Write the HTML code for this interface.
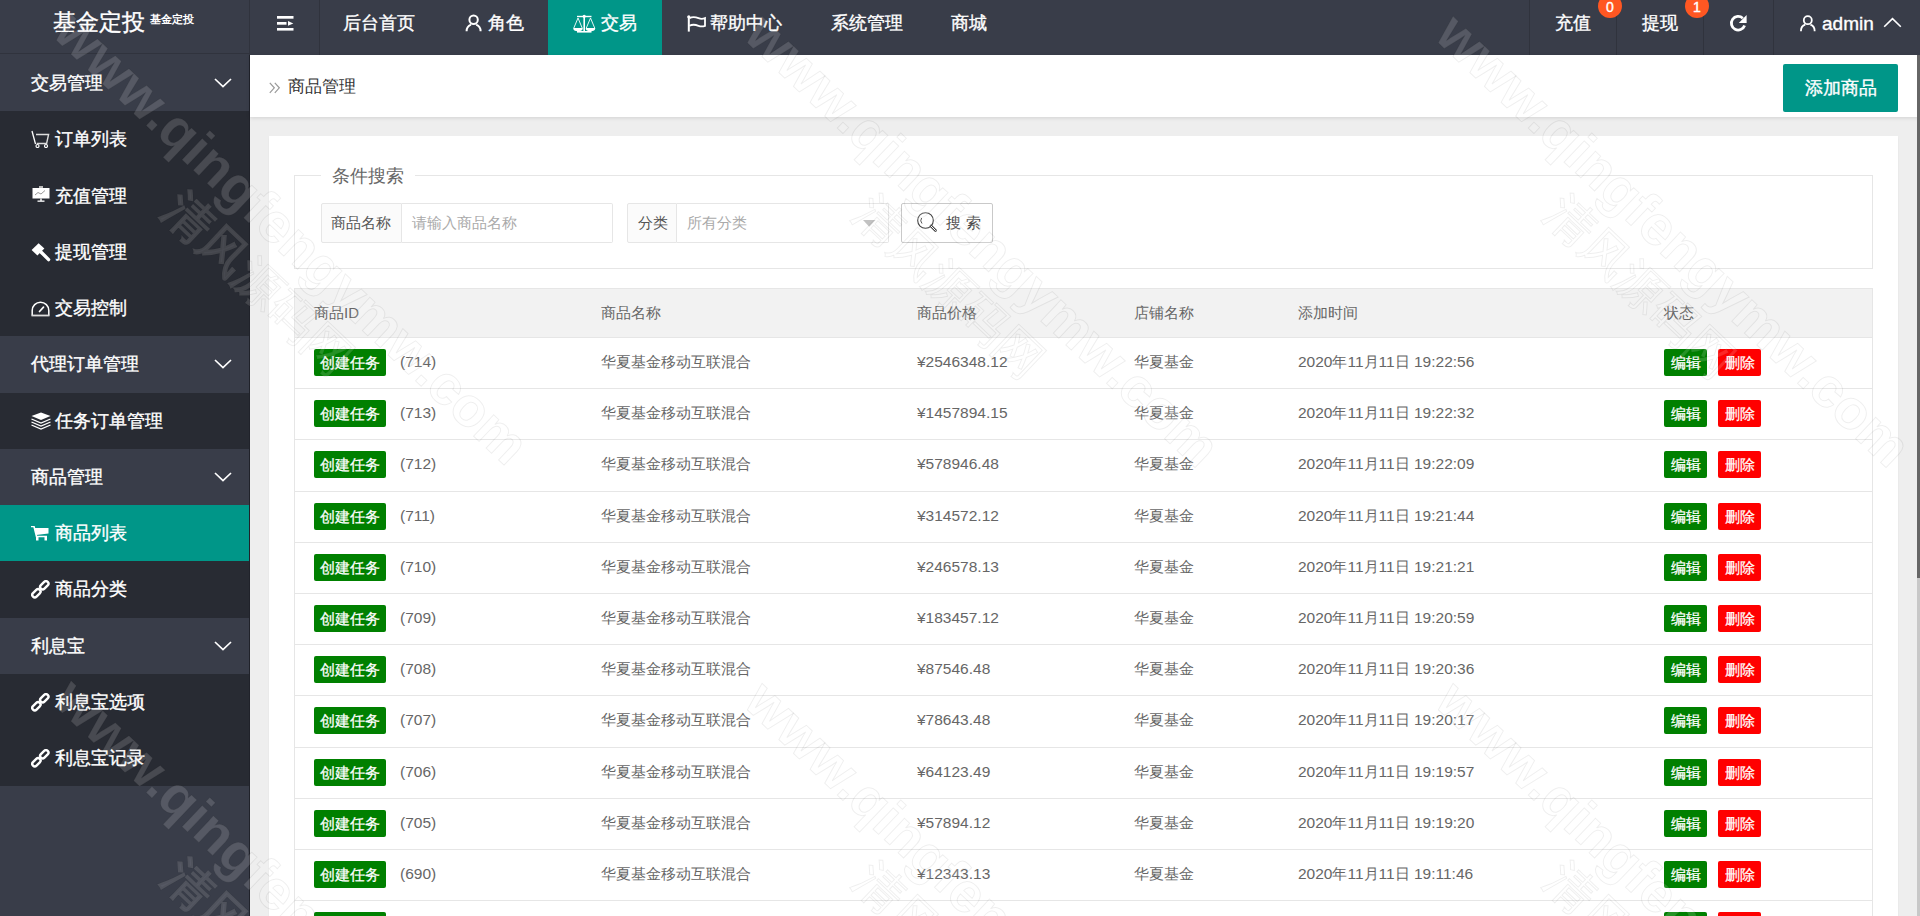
<!DOCTYPE html>
<html><head><meta charset="utf-8">
<style>
*{margin:0;padding:0;box-sizing:border-box}
html,body{width:1920px;height:916px;overflow:hidden;background:#eee;font-family:"Liberation Sans",sans-serif;color:#666}
.abs{position:absolute}
#hdr{position:absolute;left:0;top:0;width:1920px;height:55px;background:#393D49}
#logo{position:absolute;left:0;top:0;width:250px;height:54px;border-bottom:1px solid #30333d}
#logo .big{position:absolute;left:53px;top:6px;font-size:23px;line-height:32px;color:#fff;-webkit-text-stroke:0.35px #fff}
#logo .sm{position:absolute;left:150px;top:11px;font-size:11px;line-height:16px;color:#fff;font-weight:bold}
.vl{position:absolute;top:0;width:1px;height:55px;background:#30333d}
.nav{position:absolute;top:0;height:55px;line-height:47px;font-size:18px;color:#fff;white-space:nowrap;-webkit-text-stroke:0.35px #fff}
#side{position:absolute;left:0;top:55px;width:250px;height:861px;background:#393D49;border-right:1px solid #20222a}
.grp{position:absolute;left:0;width:249px;background:#393D49;color:#fff;font-size:18px;-webkit-text-stroke:0.35px #fff}
.item{position:absolute;left:0;width:249px;background:#282B33;color:#fff;font-size:18px;-webkit-text-stroke:0.35px #fff}
.sel{background:#009688}
.t{position:absolute;left:31px;top:0;line-height:56px;white-space:nowrap}
#main{position:absolute;left:250px;top:55px;width:1670px;height:861px;background:#eeeeee}
#crumb{position:absolute;left:0;top:0;width:1670px;height:62px;background:#fff;box-shadow:0 1px 4px rgba(0,0,0,.12)}
#card{position:absolute;left:19px;top:81px;width:1629px;height:800px;background:#fff;box-shadow:0 1px 2px rgba(0,0,0,.05)}
#fs{position:absolute;left:25px;top:39px;width:1579px;height:94px;border:1px solid #e6e6e6}
#legend{position:absolute;left:26px;top:-13px;padding:0 11px;background:#fff;font-size:18px;line-height:26px;color:#666}
.lab{position:absolute;top:27px;height:40px;border:1px solid #e6e6e6;background:#FBFBFB;font-size:15px;line-height:38px;color:#555;border-radius:2px 0 0 2px}
.inp{position:absolute;top:27px;height:40px;border:1px solid #e6e6e6;border-left:none;background:#fff;font-size:15px;line-height:38px;color:#aaa;border-radius:0 2px 2px 0}
#sbtn{position:absolute;left:606px;top:27px;width:92px;height:40px;border:1px solid #C9C9C9;border-radius:2px;background:#fff;font-size:15px;color:#444}
#tbl{position:absolute;left:25px;top:152px;width:1579px;height:700px}
.th{position:absolute;left:0;top:0;width:1579px;height:50px;background:#f2f2f2;border:1px solid #e6e6e6}
.row{position:absolute;left:0;width:1579px;height:51.2px;border:1px solid #e6e6e6;border-top:none;background:#fff}
.c{position:absolute;top:0;white-space:nowrap;font-size:15px;color:#666}
.th .c{line-height:47px}
.row .c{line-height:48px}
.n{font-size:15.5px!important}
.n i{font-style:normal;font-size:15px}
.gb,.rb{position:absolute;top:11px;background:#008000;color:#fff;border-radius:2px;height:27px;line-height:27px;font-size:15px;text-align:center;-webkit-text-stroke:0.25px #fff}
.rb{background:#f00}
#sb{position:absolute;left:1917px;top:55px;width:3px;height:861px;background:#c8c8c8}
#sbt{position:absolute;left:1917px;top:55px;width:3px;height:523px;background:#666}
.badge{position:absolute;top:-6px;width:24px;height:24px;border-radius:12px;background:#FF5722;color:#fff;font-size:14px;line-height:26px;text-align:center;-webkit-text-stroke:0.4px #fff}
#wm{position:absolute;left:0;top:0;pointer-events:none}
.wl{font-family:"Liberation Sans",sans-serif;font-weight:bold;font-size:55.5px;fill:rgba(255,255,255,0.15);stroke:rgba(0,0,0,0.065);stroke-width:1}
.wc{font-family:"Liberation Sans",sans-serif;font-weight:normal;font-size:48px;fill:rgba(255,255,255,0.15);stroke:rgba(0,0,0,0.065);stroke-width:1}
.wcb{font-weight:bold}
</style></head><body>
<div id="hdr">
  <div id="logo"><span class="big">基金定投</span><span class="sm">基金定投</span></div>
  <div class="vl" style="left:249px"></div>
  <div class="vl" style="left:319px"></div>
  <svg class="abs" style="left:277px;top:16px" width="17" height="15" viewBox="0 0 17 15"><rect x="0" y="0" width="16.5" height="2.7" fill="#fff"/><rect x="0" y="6" width="9.5" height="2.7" fill="#fff"/><rect x="0" y="12" width="16.5" height="2.6" fill="#fff"/><path d="M11 5 L16.3 7.4 L11 9.8 Z" fill="#fff"/></svg>
  <div class="nav" style="left:343px">后台首页</div>
  <svg class="abs" style="left:465px;top:14px" width="17" height="18" viewBox="0 0 17 18"><circle cx="8.6" cy="5.8" r="4.2" stroke="#fff" stroke-width="2" fill="none"/><path d="M1.6 17.2 A7 7 0 0 1 6 10.6 M11.2 10.6 A7 7 0 0 1 15.6 17.2" stroke="#fff" stroke-width="2" fill="none"/></svg>
  <div class="nav" style="left:488px">角色</div>
  <div class="abs" style="left:548px;top:0;width:114px;height:55px;background:#009688"></div>
  <svg class="abs" style="left:572px;top:13px" width="25" height="21" viewBox="0 0 25 21"><path d="M5 3.5 H19.5" stroke="#fff" stroke-width="1.4"/><circle cx="12.2" cy="3.3" r="1.6" fill="#fff"/><path d="M12.2 4 V18.5" stroke="#fff" stroke-width="1.6"/><path d="M5 18.8 H19.5" stroke="#fff" stroke-width="1.6"/><path d="M6 5 L1.8 15 M6 5 L10.2 15 M18.5 5 L14.3 15 M18.5 5 L22.7 15" stroke="#fff" stroke-width="0.9" fill="none"/><path d="M1.2 15 H10.8 A4.8 3.2 0 0 1 1.2 15 Z M13.7 15 H23.3 A4.8 3.2 0 0 1 13.7 15 Z" fill="#fff"/></svg>
  <div class="nav" style="left:601px">交易</div>
  <svg class="abs" style="left:686px;top:15px" width="21" height="18" viewBox="0 0 21 18"><circle cx="2.8" cy="1.8" r="1.6" fill="#fff"/><path d="M2.8 2 V16.6" stroke="#fff" stroke-width="2"/><path d="M3.5 3.2 C7 1.2 10 2.2 12.5 3.2 C15 4.2 17 4 19 3.2 V10.8 C17 11.6 15 11.8 12.5 10.8 C10 9.8 7 8.8 3.5 10.8" stroke="#fff" stroke-width="1.8" fill="none"/></svg>
  <div class="nav" style="left:710px">帮助中心</div>
  <div class="nav" style="left:831px">系统管理</div>
  <div class="nav" style="left:951px">商城</div>

  <div class="vl" style="left:1529px"></div>
  <div class="vl" style="left:1616px"></div>
  <div class="vl" style="left:1703px"></div>
  <div class="vl" style="left:1773px"></div>
  <div class="nav" style="left:1555px">充值</div>
  <div class="badge" style="left:1598px">0</div>
  <div class="nav" style="left:1642px">提现</div>
  <div class="badge" style="left:1685px">1</div>
  <svg class="abs" style="left:1729px;top:14px" width="19" height="19" viewBox="0 0 19 19"><path d="M15.6 11.5 A6.8 6.8 0 1 1 13.8 4.2" stroke="#fff" stroke-width="2.8" fill="none"/><path d="M9.8 8.9 H17.6 V1 Z" fill="#fff"/></svg>
  <svg class="abs" style="left:1800px;top:15px" width="16" height="17" viewBox="0 0 16 17"><circle cx="7.8" cy="5.2" r="4" stroke="#fff" stroke-width="1.8" fill="none"/><path d="M1 16.2 A6.6 6.6 0 0 1 5.2 9.6 M10.4 9.6 A6.6 6.6 0 0 1 14.6 16.2" stroke="#fff" stroke-width="1.8" fill="none"/></svg>
  <div class="nav" style="left:1822px;font-size:19px;font-weight:normal">admin</div>
  <svg class="abs" style="left:1883px;top:17px" width="19" height="11" viewBox="0 0 19 11"><path d="M1.2 9.8 L9.5 1.6 L17.8 9.8" stroke="#fff" stroke-width="1.6" fill="none"/></svg>
</div>

<div id="side">
<div class="grp" style="top:0.0px;height:56.25px"><span class="t" style="left:31px">交易管理</span><span class="abs" style="left:214px;top:23px;line-height:0"><svg width="18" height="10" viewBox="0 0 18 10"><path d="M1 1 L9 8.6 L17 1" stroke="#fff" stroke-width="1.7" fill="none"/></svg></span></div>
<div class="item" style="top:56.25px;height:56.25px"><span class="abs" style="left:31px;top:19px;line-height:0"><svg width="19" height="18" viewBox="0 0 19 18"><path d="M1 1 L4.5 14" stroke="#fff" stroke-width="1.3" fill="none"/><path d="M5 4.5 H17.6 L15.6 13.5 H5.7" stroke="#ddd" stroke-width="1.4" fill="none"/><circle cx="6.5" cy="16" r="1.5" stroke="#fff" stroke-width="1.2" fill="none"/><circle cx="15" cy="16" r="1.5" stroke="#fff" stroke-width="1.2" fill="none"/></svg></span><span class="t" style="left:55px">订单列表</span></div>
<div class="item" style="top:112.5px;height:56.25px"><span class="abs" style="left:32px;top:18px;line-height:0"><svg width="18" height="16" viewBox="0 0 18 16"><rect x="7" y="0" width="4" height="2" fill="#bbb"/><rect x="0.5" y="2" width="17" height="10.5" fill="#fff"/><path d="M3 9 L6 6.5 L9 8 L13 4.5" stroke="#999" stroke-width="1" fill="none"/><rect x="8.3" y="12.5" width="1.4" height="2.5" fill="#fff"/><rect x="5.5" y="14.5" width="7" height="1.3" fill="#fff"/></svg></span><span class="t" style="left:55px">充值管理</span></div>
<div class="item" style="top:168.75px;height:56.25px"><span class="abs" style="left:31px;top:19px;line-height:0"><svg width="20" height="19" viewBox="0 0 20 19"><path d="M0.6 6.9 L7.6 0.2 L13.4 5.6 L6.4 12.4 Z" fill="#fff"/><path d="M10.2 9.2 L17.6 16.6" stroke="#fff" stroke-width="3.4" stroke-linecap="round"/></svg></span><span class="t" style="left:55px">提现管理</span></div>
<div class="item" style="top:225.0px;height:56.25px"><span class="abs" style="left:31px;top:21px;line-height:0"><svg width="19" height="16" viewBox="0 0 19 16"><path d="M1.2 14.5 V9.5 A8.3 8.3 0 0 1 17.8 9.5 V14.5" stroke="#fff" stroke-width="1.5" fill="none"/><rect x="0.5" y="13.6" width="18" height="1.8" fill="#ddd"/><path d="M8.5 10.5 L12.5 6.2" stroke="#fff" stroke-width="1.7" stroke-linecap="round"/></svg></span><span class="t" style="left:55px">交易控制</span></div>
<div class="grp" style="top:281.25px;height:56.25px"><span class="t" style="left:31px">代理订单管理</span><span class="abs" style="left:214px;top:23px;line-height:0"><svg width="18" height="10" viewBox="0 0 18 10"><path d="M1 1 L9 8.6 L17 1" stroke="#fff" stroke-width="1.7" fill="none"/></svg></span></div>
<div class="item" style="top:337.5px;height:56.25px"><span class="abs" style="left:31px;top:19px;line-height:0"><svg width="20" height="18" viewBox="0 0 20 18"><path d="M0.5 4 L10 0.5 L19.5 4 L10 8 Z" fill="#fff"/><path d="M0.5 7 L10 11 L19.5 7" stroke="#fff" stroke-width="1.3" fill="none"/><path d="M0.5 10 L10 14 L19.5 10" stroke="#fff" stroke-width="1.3" fill="none"/><path d="M0.5 13 L10 17 L19.5 13" stroke="#fff" stroke-width="1.3" fill="none"/></svg></span><span class="t" style="left:55px">任务订单管理</span></div>
<div class="grp" style="top:393.75px;height:56.25px"><span class="t" style="left:31px">商品管理</span><span class="abs" style="left:214px;top:23px;line-height:0"><svg width="18" height="10" viewBox="0 0 18 10"><path d="M1 1 L9 8.6 L17 1" stroke="#fff" stroke-width="1.7" fill="none"/></svg></span></div>
<div class="item sel" style="top:450.0px;height:56.25px"><span class="abs" style="left:31px;top:21px;line-height:0"><svg width="18" height="15" viewBox="0 0 18 15"><path d="M0 0.5 H3 L5.5 10.5 H16" stroke="#fff" stroke-width="1.6" fill="none"/><path d="M3.5 2 H17.5 V7.5 L5.2 9 Z" fill="#fff"/><rect x="5" y="11" width="2.5" height="3.5" fill="#fff"/><rect x="13.5" y="11" width="2.5" height="3.5" fill="#fff"/></svg></span><span class="t" style="left:55px">商品列表</span></div>
<div class="item" style="top:506.25px;height:56.25px"><span class="abs" style="left:31px;top:19px;line-height:0"><svg width="19" height="19" viewBox="0 0 19 19"><g fill="none" stroke="#fff" stroke-width="2.4"><rect x="8.50" y="2.80" width="9.6" height="5.0" rx="2.5" transform="rotate(-45 13.3 5.3)"/><rect x="0.60" y="10.70" width="9.6" height="5.0" rx="2.5" transform="rotate(-45 5.4 13.2)"/></g></svg></span><span class="t" style="left:55px">商品分类</span></div>
<div class="grp" style="top:562.5px;height:56.25px"><span class="t" style="left:31px">利息宝</span><span class="abs" style="left:214px;top:23px;line-height:0"><svg width="18" height="10" viewBox="0 0 18 10"><path d="M1 1 L9 8.6 L17 1" stroke="#fff" stroke-width="1.7" fill="none"/></svg></span></div>
<div class="item" style="top:618.75px;height:56.25px"><span class="abs" style="left:31px;top:19px;line-height:0"><svg width="19" height="19" viewBox="0 0 19 19"><g fill="none" stroke="#fff" stroke-width="2.4"><rect x="8.50" y="2.80" width="9.6" height="5.0" rx="2.5" transform="rotate(-45 13.3 5.3)"/><rect x="0.60" y="10.70" width="9.6" height="5.0" rx="2.5" transform="rotate(-45 5.4 13.2)"/></g></svg></span><span class="t" style="left:55px">利息宝选项</span></div>
<div class="item" style="top:675.0px;height:56.25px"><span class="abs" style="left:31px;top:19px;line-height:0"><svg width="19" height="19" viewBox="0 0 19 19"><g fill="none" stroke="#fff" stroke-width="2.4"><rect x="8.50" y="2.80" width="9.6" height="5.0" rx="2.5" transform="rotate(-45 13.3 5.3)"/><rect x="0.60" y="10.70" width="9.6" height="5.0" rx="2.5" transform="rotate(-45 5.4 13.2)"/></g></svg></span><span class="t" style="left:55px">利息宝记录</span></div>
</div>

<div id="main">
  <div id="crumb">
    <svg class="abs" style="left:19px;top:27px" width="12" height="12" viewBox="0 0 12 12"><path d="M0.8 0.8 L5.3 5.8 L0.8 10.8 M5.8 0.8 L10.3 5.8 L5.8 10.8" stroke="#999" stroke-width="1.2" fill="none"/></svg>
    <span class="abs" style="left:38px;top:16px;font-size:17.2px;line-height:30px;color:#333">商品管理</span>
    <div class="abs" style="left:1533px;top:9px;width:115px;height:48px;background:#009688;border-radius:2px;color:#fff;font-size:18px;line-height:48px;-webkit-text-stroke:0.35px #fff;text-align:center">添加商品</div>
  </div>
  <div id="card">
    <div id="fs">
      <span id="legend">条件搜索</span>
      <div class="lab" style="left:26px;width:81px;padding-left:9px">商品名称</div>
      <div class="inp" style="left:107px;width:211px;padding-left:10px">请输入商品名称</div>
      <div class="lab" style="left:332px;width:50px;padding-left:10px">分类</div>
      <div class="inp" style="left:382px;width:212px;padding-left:10px">所有分类
        <svg class="abs" style="left:186px;top:16px" width="13" height="7" viewBox="0 0 13 7"><path d="M0 0 H12.5 L6.25 6.8 Z" fill="#c2c2c2"/></svg>
      </div>
      <div id="sbtn">
        <svg class="abs" style="left:15px;top:8px" width="21" height="21" viewBox="0 0 21 21"><circle cx="8.5" cy="8.5" r="7.8" stroke="#444" stroke-width="1.1" fill="none"/><path d="M4.6 6 A4.5 4.5 0 0 0 5 11.5" stroke="#444" stroke-width="0.9" fill="none"/><path d="M14 14 L18.5 18.5" stroke="#444" stroke-width="2.6" stroke-linecap="round"/><path d="M14 14 L18.5 18.5" stroke="#fff" stroke-width="1" stroke-linecap="round"/></svg>
        <span class="abs" style="left:44px;top:0;line-height:38px;letter-spacing:5px">搜索</span>
      </div>
    </div>
    <div id="tbl">
<div class="th"><span class="c" style="left:19px">商品ID</span><span class="c" style="left:306px">商品名称</span><span class="c" style="left:622px">商品价格</span><span class="c" style="left:839px">店铺名称</span><span class="c" style="left:1003px">添加时间</span><span class="c" style="left:1369px">状态</span></div>
<div class="row" style="top:50.0px"><span class="gb" style="left:19px;width:72px">创建任务</span><span class="c n" style="left:105px">(714)</span><span class="c" style="left:306px">华夏基金移动互联混合</span><span class="c n" style="left:622px">¥2546348.12</span><span class="c" style="left:839px">华夏基金</span><span class="c n" style="left:1003px">2020<i>年</i>11<i>月</i>11<i>日</i> 19:22:56</span><span class="gb" style="left:1369px;width:43px">编辑</span><span class="rb" style="left:1423px;width:43px">删除</span></div>
<div class="row" style="top:101.2px"><span class="gb" style="left:19px;width:72px">创建任务</span><span class="c n" style="left:105px">(713)</span><span class="c" style="left:306px">华夏基金移动互联混合</span><span class="c n" style="left:622px">¥1457894.15</span><span class="c" style="left:839px">华夏基金</span><span class="c n" style="left:1003px">2020<i>年</i>11<i>月</i>11<i>日</i> 19:22:32</span><span class="gb" style="left:1369px;width:43px">编辑</span><span class="rb" style="left:1423px;width:43px">删除</span></div>
<div class="row" style="top:152.4px"><span class="gb" style="left:19px;width:72px">创建任务</span><span class="c n" style="left:105px">(712)</span><span class="c" style="left:306px">华夏基金移动互联混合</span><span class="c n" style="left:622px">¥578946.48</span><span class="c" style="left:839px">华夏基金</span><span class="c n" style="left:1003px">2020<i>年</i>11<i>月</i>11<i>日</i> 19:22:09</span><span class="gb" style="left:1369px;width:43px">编辑</span><span class="rb" style="left:1423px;width:43px">删除</span></div>
<div class="row" style="top:203.6px"><span class="gb" style="left:19px;width:72px">创建任务</span><span class="c n" style="left:105px">(711)</span><span class="c" style="left:306px">华夏基金移动互联混合</span><span class="c n" style="left:622px">¥314572.12</span><span class="c" style="left:839px">华夏基金</span><span class="c n" style="left:1003px">2020<i>年</i>11<i>月</i>11<i>日</i> 19:21:44</span><span class="gb" style="left:1369px;width:43px">编辑</span><span class="rb" style="left:1423px;width:43px">删除</span></div>
<div class="row" style="top:254.8px"><span class="gb" style="left:19px;width:72px">创建任务</span><span class="c n" style="left:105px">(710)</span><span class="c" style="left:306px">华夏基金移动互联混合</span><span class="c n" style="left:622px">¥246578.13</span><span class="c" style="left:839px">华夏基金</span><span class="c n" style="left:1003px">2020<i>年</i>11<i>月</i>11<i>日</i> 19:21:21</span><span class="gb" style="left:1369px;width:43px">编辑</span><span class="rb" style="left:1423px;width:43px">删除</span></div>
<div class="row" style="top:306.0px"><span class="gb" style="left:19px;width:72px">创建任务</span><span class="c n" style="left:105px">(709)</span><span class="c" style="left:306px">华夏基金移动互联混合</span><span class="c n" style="left:622px">¥183457.12</span><span class="c" style="left:839px">华夏基金</span><span class="c n" style="left:1003px">2020<i>年</i>11<i>月</i>11<i>日</i> 19:20:59</span><span class="gb" style="left:1369px;width:43px">编辑</span><span class="rb" style="left:1423px;width:43px">删除</span></div>
<div class="row" style="top:357.2px"><span class="gb" style="left:19px;width:72px">创建任务</span><span class="c n" style="left:105px">(708)</span><span class="c" style="left:306px">华夏基金移动互联混合</span><span class="c n" style="left:622px">¥87546.48</span><span class="c" style="left:839px">华夏基金</span><span class="c n" style="left:1003px">2020<i>年</i>11<i>月</i>11<i>日</i> 19:20:36</span><span class="gb" style="left:1369px;width:43px">编辑</span><span class="rb" style="left:1423px;width:43px">删除</span></div>
<div class="row" style="top:408.4px"><span class="gb" style="left:19px;width:72px">创建任务</span><span class="c n" style="left:105px">(707)</span><span class="c" style="left:306px">华夏基金移动互联混合</span><span class="c n" style="left:622px">¥78643.48</span><span class="c" style="left:839px">华夏基金</span><span class="c n" style="left:1003px">2020<i>年</i>11<i>月</i>11<i>日</i> 19:20:17</span><span class="gb" style="left:1369px;width:43px">编辑</span><span class="rb" style="left:1423px;width:43px">删除</span></div>
<div class="row" style="top:459.6px"><span class="gb" style="left:19px;width:72px">创建任务</span><span class="c n" style="left:105px">(706)</span><span class="c" style="left:306px">华夏基金移动互联混合</span><span class="c n" style="left:622px">¥64123.49</span><span class="c" style="left:839px">华夏基金</span><span class="c n" style="left:1003px">2020<i>年</i>11<i>月</i>11<i>日</i> 19:19:57</span><span class="gb" style="left:1369px;width:43px">编辑</span><span class="rb" style="left:1423px;width:43px">删除</span></div>
<div class="row" style="top:510.8px"><span class="gb" style="left:19px;width:72px">创建任务</span><span class="c n" style="left:105px">(705)</span><span class="c" style="left:306px">华夏基金移动互联混合</span><span class="c n" style="left:622px">¥57894.12</span><span class="c" style="left:839px">华夏基金</span><span class="c n" style="left:1003px">2020<i>年</i>11<i>月</i>11<i>日</i> 19:19:20</span><span class="gb" style="left:1369px;width:43px">编辑</span><span class="rb" style="left:1423px;width:43px">删除</span></div>
<div class="row" style="top:562.0px"><span class="gb" style="left:19px;width:72px">创建任务</span><span class="c n" style="left:105px">(690)</span><span class="c" style="left:306px">华夏基金移动互联混合</span><span class="c n" style="left:622px">¥12343.13</span><span class="c" style="left:839px">华夏基金</span><span class="c n" style="left:1003px">2020<i>年</i>11<i>月</i>11<i>日</i> 19:11:46</span><span class="gb" style="left:1369px;width:43px">编辑</span><span class="rb" style="left:1423px;width:43px">删除</span></div>
<div class="row" style="top:613.2px"><span class="gb" style="left:19px;width:72px">创建任务</span><span class="c n" style="left:105px">(689)</span><span class="c" style="left:306px">华夏基金移动互联混合</span><span class="c n" style="left:622px">¥12343.13</span><span class="c" style="left:839px">华夏基金</span><span class="c n" style="left:1003px">2020<i>年</i>11<i>月</i>11<i>日</i> 19:11:06</span><span class="gb" style="left:1369px;width:43px">编辑</span><span class="rb" style="left:1423px;width:43px">删除</span></div>
    </div>
  </div>
</div>
<div id="sb"></div><div id="sbt"></div>
<svg id="wm" width="1920" height="916" viewBox="0 0 1920 916"><defs><clipPath id="cd"><rect x="0" y="0" width="250" height="916"/></clipPath><clipPath id="cl"><rect x="250" y="0" width="1670" height="916"/></clipPath></defs><g transform="translate(0,0)"><text transform="translate(51.1 35.2) rotate(43.5)" class="wl">www.qingfengymw.com</text></g><g clip-path="url(#cl)"><text transform="translate(160 213) rotate(43.5)" class="wc">清风源码网</text></g><g clip-path="url(#cd)"><text transform="translate(160 213) rotate(43.5)" class="wc wcb">清风源码网</text></g><g transform="translate(691,2.5)"><text transform="translate(51.1 35.2) rotate(43.5)" class="wl">www.qingfengymw.com</text></g><g clip-path="url(#cl)"><text transform="translate(851 215.5) rotate(43.5)" class="wc">清风源码网</text></g><g transform="translate(1382,2.5)"><text transform="translate(51.1 35.2) rotate(43.5)" class="wl">www.qingfengymw.com</text></g><g clip-path="url(#cl)"><text transform="translate(1542 215.5) rotate(43.5)" class="wc">清风源码网</text></g><g transform="translate(0,667)"><text transform="translate(51.1 35.2) rotate(43.5)" class="wl">www.qingfengymw.com</text></g><g clip-path="url(#cl)"><text transform="translate(160 880) rotate(43.5)" class="wc">清风源码网</text></g><g clip-path="url(#cd)"><text transform="translate(160 880) rotate(43.5)" class="wc wcb">清风源码网</text></g><g transform="translate(691,669.5)"><text transform="translate(51.1 35.2) rotate(43.5)" class="wl">www.qingfengymw.com</text></g><g clip-path="url(#cl)"><text transform="translate(851 882.5) rotate(43.5)" class="wc">清风源码网</text></g><g transform="translate(1382,669.5)"><text transform="translate(51.1 35.2) rotate(43.5)" class="wl">www.qingfengymw.com</text></g><g clip-path="url(#cl)"><text transform="translate(1542 882.5) rotate(43.5)" class="wc">清风源码网</text></g></svg>
</body></html>
